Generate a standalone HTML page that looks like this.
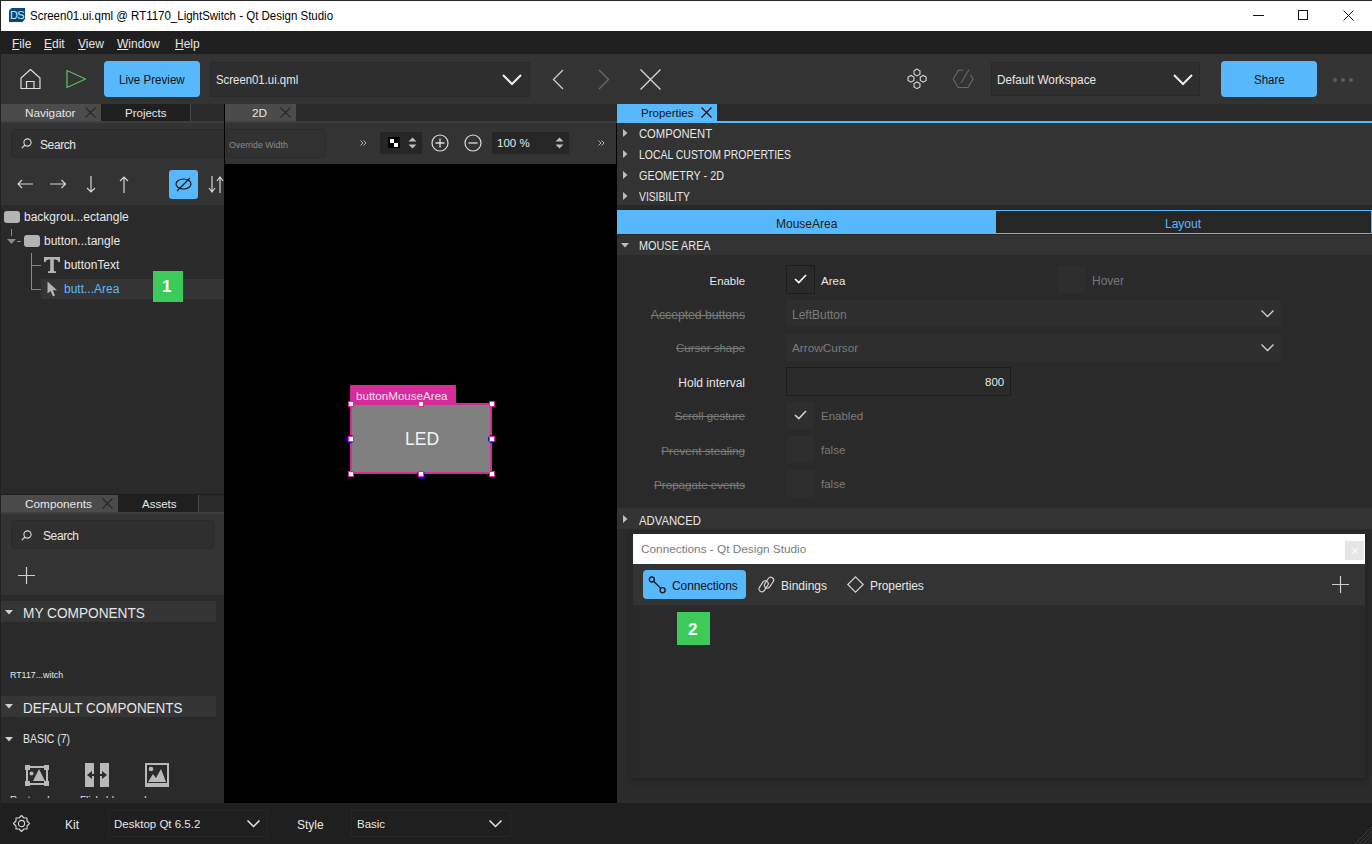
<!DOCTYPE html>
<html><head><meta charset="utf-8">
<style>
*{margin:0;padding:0;box-sizing:border-box}
html,body{width:1372px;height:844px;overflow:hidden;background:#333;font-family:"Liberation Sans",sans-serif}
.a{position:absolute}
.t{position:absolute;white-space:nowrap;line-height:1;font-size:12px;color:#e6e6e6}
svg{position:absolute;overflow:visible}
.lbl{position:absolute;white-space:nowrap;line-height:1;font-size:12px;text-align:right;width:140px;left:605px;color:#e6e6e6}
.dis{color:#7a7a7a;text-decoration:line-through}
</style></head><body>
<!-- ============ TITLE BAR ============ -->
<div class="a" style="left:0;top:0;width:1372px;height:31px;background:#fff;border-top:1px solid #3a3a3a;border-left:1px solid #3a3a3a"></div>
<div class="a" style="left:9px;top:8px;width:16px;height:14px;background:#034a7c;clip-path:polygon(16% 0,100% 0,100% 78%,84% 100%,0 100%,0 20%)"></div><div class="t" style="left:10px;top:10px;font-size:11px;color:#dce8ee;letter-spacing:-0.8px">DS</div>
<div class="t" style="left:30px;top:10px;font-size:12.5px;color:#000;transform:scaleX(0.919);transform-origin:0 0">Screen01.ui.qml @ RT1170_LightSwitch - Qt Design Studio</div>
<div class="a" style="left:1253px;top:15px;width:11px;height:1px;background:#111"></div>
<div class="a" style="left:1298px;top:10px;width:10px;height:10px;border:1px solid #111"></div>
<svg style="left:1343px;top:10px" width="11" height="11"><path d="M0.5 0.5L10.5 10.5M10.5 0.5L0.5 10.5" stroke="#111" stroke-width="1"/></svg>

<!-- ============ MENU BAR ============ -->
<div class="a" style="left:0;top:31px;width:1372px;height:23px;background:#1f1f1f;border-left:1px solid #3a3a3a"></div>
<div class="t" style="left:12px;top:38px"><u>F</u>ile</div>
<div class="t" style="left:44px;top:38px"><u>E</u>dit</div>
<div class="t" style="left:78px;top:38px"><u>V</u>iew</div>
<div class="t" style="left:117px;top:38px"><u>W</u>indow</div>
<div class="t" style="left:175px;top:38px"><u>H</u>elp</div>

<!-- ============ TOOLBAR ============ -->
<div class="a" style="left:0;top:54px;width:1372px;height:50px;background:#333;border-left:1px solid #262626"></div>
<svg style="left:20px;top:69px" width="21" height="20"><path d="M1 9 L10.5 0.5 L20 9 V19.5 H1 Z" fill="none" stroke="#dcdcdc" stroke-width="1.2" stroke-linejoin="round"/><path d="M6.5 19.5 V12.5 H14 V19.5" fill="none" stroke="#dcdcdc" stroke-width="1.2"/></svg>
<svg style="left:66px;top:69px" width="21" height="20"><path d="M1 1.5 L19.5 10 L1 18.5 Z" fill="none" stroke="#5cb85c" stroke-width="1.3" stroke-linejoin="round"/></svg>
<div class="a" style="left:104px;top:61px;width:96px;height:36px;background:#57b9fc;border-radius:4px"></div>
<div class="t" style="left:119px;top:74px;font-size:12.5px;color:#111;transform:scaleX(0.927);transform-origin:0 0">Live Preview</div>
<div class="a" style="left:210px;top:62px;width:320px;height:35px;background:#2e2e2e;border:1px solid #292929"></div>
<div class="t" style="left:216px;top:74px;font-size:12.5px;color:#e6e6e6;transform:scaleX(0.91);transform-origin:0 0">Screen01.ui.qml</div>
<svg style="left:502px;top:74px" width="20" height="11"><path d="M1 1 L10 10 L19 1" fill="none" stroke="#f0f0f0" stroke-width="2"/></svg>
<svg style="left:552px;top:69px" width="12" height="21"><path d="M11 1 L1.5 10.5 L11 20" fill="none" stroke="#cfcfcf" stroke-width="1.3"/></svg>
<svg style="left:598px;top:69px" width="12" height="21"><path d="M1 1 L10.5 10.5 L1 20" fill="none" stroke="#6a6a6a" stroke-width="1.3"/></svg>
<svg style="left:640px;top:69px" width="21" height="21"><path d="M0.5 0.5 L20.5 20.5 M20.5 0.5 L0.5 20.5" fill="none" stroke="#d8d8d8" stroke-width="1.3"/></svg>
<!-- right icons -->
<svg style="left:900px;top:62px" width="30" height="30"><path d="M17.00 7.10 L14.06 8.80 L14.06 12.20 L17.00 13.90 L19.94 12.20 L19.94 8.80 Z M11.00 13.40 L8.06 15.10 L8.06 18.50 L11.00 20.20 L13.94 18.50 L13.94 15.10 Z M23.20 13.40 L20.26 15.10 L20.26 18.50 L23.20 20.20 L26.14 18.50 L26.14 15.10 Z M17.00 19.90 L14.06 21.60 L14.06 25.00 L17.00 26.70 L19.94 25.00 L19.94 21.60 Z" fill="none" stroke="#d8d8d8" stroke-width="1.1"/></svg>
<svg style="left:950px;top:66px" width="26" height="26"><g fill="none" stroke="#6a6a6a" stroke-width="1.1"><path d="M13 4.3 H8.5 L3.2 13 L8.3 21.5 H18 L23 13 L20.5 8.7"/><path d="M11 17 L19 3.5"/></g></svg>
<div class="a" style="left:991px;top:62px;width:209px;height:34px;background:#2e2e2e;border:1px solid #292929"></div>
<div class="t" style="left:997px;top:74px;font-size:12.5px;color:#e6e6e6;transform:scaleX(0.94);transform-origin:0 0">Default Workspace</div>
<svg style="left:1173px;top:74px" width="20" height="11"><path d="M1 1 L10 10 L19 1" fill="none" stroke="#f0f0f0" stroke-width="2"/></svg>
<div class="a" style="left:1221px;top:61px;width:96px;height:36px;background:#57b9fc;border-radius:4px"></div>
<div class="t" style="left:1254px;top:74px;font-size:12.5px;color:#111;transform:scaleX(0.92);transform-origin:0 0">Share</div>
<div class="a" style="left:1333px;top:78px;width:4px;height:4px;border-radius:2px;background:#5a5a5a"></div>
<div class="a" style="left:1341px;top:78px;width:4px;height:4px;border-radius:2px;background:#5a5a5a"></div>
<div class="a" style="left:1349px;top:78px;width:4px;height:4px;border-radius:2px;background:#5a5a5a"></div>

<!-- LEFT PANEL -->
<div class="a" style="left:0;top:104px;width:224px;height:17px;background:#2a2a2a"></div>
<div class="a" style="left:1px;top:104px;width:100px;height:17px;background:#4b4b4b"></div>
<div class="t" style="left:25px;top:108px;font-size:11.8px">Navigator</div>
<svg style="left:85px;top:107px" width="11" height="11"><path d="M0.5 0.5L10.5 10.5M10.5 0.5L0.5 10.5" stroke="#262626" stroke-width="1.2"/></svg>
<div class="a" style="left:101px;top:104px;width:89px;height:17px;background:#1f1f1f"></div>
<div class="a" style="left:190px;top:104px;width:1px;height:17px;background:#4a4a4a"></div>
<div class="t" style="left:125px;top:108px;font-size:11.5px">Projects</div>
<div class="a" style="left:0;top:121px;width:224px;height:2px;background:#3d3d3d"></div>
<div class="a" style="left:0;top:123px;width:224px;height:82px;background:#333;border-left:1px solid #262626"></div>
<div class="a" style="left:11px;top:129px;width:230px;height:29px;background:#2f2f2f;border:1px solid #2a2a2a;border-radius:4px"></div>
<svg style="left:21px;top:138px" width="11" height="11"><circle cx="6.5" cy="4.5" r="3.6" fill="none" stroke="#d8d8d8" stroke-width="1.1"/><path d="M4 7 L0.8 10.2" stroke="#d8d8d8" stroke-width="1.2"/></svg>
<div class="t" style="left:40px;top:139px;font-size:12px;letter-spacing:-0.4px">Search</div>
<!-- arrows -->
<svg style="left:17px;top:179px" width="17" height="10"><path d="M1 5 H16 M5 1 L1 5 L5 9" fill="none" stroke="#d4d4d4" stroke-width="1.2"/></svg>
<svg style="left:50px;top:179px" width="17" height="10"><path d="M0 5 H15.5 M11.5 1 L15.5 5 L11.5 9" fill="none" stroke="#d4d4d4" stroke-width="1.2"/></svg>
<svg style="left:86px;top:176px" width="10" height="17"><path d="M5 0 V16 M1 12 L5 16 L9 12" fill="none" stroke="#d4d4d4" stroke-width="1.2"/></svg>
<svg style="left:119px;top:176px" width="10" height="17"><path d="M5 1 V17 M1 5 L5 1 L9 5" fill="none" stroke="#d4d4d4" stroke-width="1.2"/></svg>
<div class="a" style="left:169px;top:170px;width:29px;height:29px;background:#57b9fc;border-radius:3px"></div>
<svg style="left:175px;top:177px" width="17" height="15"><ellipse cx="8.5" cy="7" rx="7.5" ry="5" fill="none" stroke="#111" stroke-width="1.1"/><path d="M2 14 L15 1" stroke="#111" stroke-width="1.1"/></svg>
<svg style="left:208px;top:176px" width="16" height="17"><path d="M4 0 V16 M1 12 L4 16 L7 12 M12 17 V1 M9 5 L12 1 L15 5" fill="none" stroke="#d4d4d4" stroke-width="1.2"/></svg>
<!-- tree -->
<div class="a" style="left:0;top:205px;width:224px;height:289px;background:#2a2a2a;border-left:1px solid #262626"></div>
<div class="a" style="left:4px;top:211px;width:16px;height:12px;background:#b4b4b4;border-radius:3px"></div>
<div class="t" style="left:24px;top:211px;font-size:12px">backgrou...ectangle</div>
<div class="a" style="left:11px;top:229px;width:1px;height:7px;background:#8a8a8a"></div>
<svg style="left:7px;top:239px" width="10" height="6"><path d="M0 0 H9 L4.5 5 Z" fill="#8a8a8a"/></svg>
<div class="a" style="left:17px;top:241px;width:4px;height:1px;background:#8a8a8a"></div>
<div class="a" style="left:24px;top:235px;width:16px;height:12px;background:#b4b4b4;border-radius:3px"></div>
<div class="t" style="left:44px;top:235px;font-size:12px">button...tangle</div>
<div class="a" style="left:31px;top:253px;width:1px;height:37px;background:#8a8a8a"></div>
<div class="a" style="left:31px;top:265px;width:10px;height:1px;background:#8a8a8a"></div>
<div class="a" style="left:31px;top:289px;width:10px;height:1px;background:#8a8a8a"></div>
<svg style="left:44px;top:257px" width="16" height="16"><path d="M0 0 H16 V5 H14.5 Q14 2.5 11.5 2.5 H9.8 V13.2 Q9.8 14.2 11 14.2 H12 V16 H4 V14.2 H5 Q6.2 14.2 6.2 13.2 V2.5 H4.5 Q2 2.5 1.5 5 H0 Z" fill="#b4b4b4"/></svg>
<div class="t" style="left:64px;top:259px;font-size:12px">buttonText</div>
<div class="a" style="left:41px;top:279px;width:183px;height:20px;background:#353535"></div>
<svg style="left:47px;top:281px" width="11" height="16"><path d="M0.5 0.5 V12.5 L3.5 10 L6 15.5 L8 14.5 L5.8 9.2 L10 9.2 Z" fill="#b4b4b4"/></svg>
<div class="t" style="left:64px;top:283px;font-size:12px;color:#57b9fc">butt...Area</div>
<div class="a" style="left:153px;top:271px;width:30px;height:31px;background:#3ccb5a"></div>
<div class="t" style="left:162px;top:278px;font-size:17px;font-weight:bold;color:#fff">1</div>
<!-- components panel -->
<div class="a" style="left:0;top:494px;width:224px;height:1px;background:#1e1e1e"></div>
<div class="a" style="left:0;top:495px;width:224px;height:17px;background:#2a2a2a"></div>
<div class="a" style="left:1px;top:495px;width:117px;height:17px;background:#4b4b4b"></div>
<div class="t" style="left:25px;top:499px;font-size:11.8px">Components</div>
<svg style="left:102px;top:498px" width="11" height="11"><path d="M0.5 0.5L10.5 10.5M10.5 0.5L0.5 10.5" stroke="#262626" stroke-width="1.2"/></svg>
<div class="a" style="left:118px;top:495px;width:80px;height:17px;background:#1f1f1f"></div>
<div class="a" style="left:198px;top:495px;width:1px;height:17px;background:#4a4a4a"></div>
<div class="t" style="left:142px;top:499px;font-size:11.5px">Assets</div>
<div class="a" style="left:0;top:512px;width:224px;height:2px;background:#3d3d3d"></div>
<div class="a" style="left:0;top:514px;width:224px;height:81px;background:#333;border-left:1px solid #262626"></div>
<div class="a" style="left:11px;top:520px;width:203px;height:29px;background:#2f2f2f;border:1px solid #2a2a2a;border-radius:4px"></div>
<svg style="left:21px;top:530px" width="11" height="11"><circle cx="6.5" cy="4.5" r="3.6" fill="none" stroke="#d8d8d8" stroke-width="1.1"/><path d="M4 7 L0.8 10.2" stroke="#d8d8d8" stroke-width="1.2"/></svg>
<div class="t" style="left:43px;top:530px;font-size:12px;letter-spacing:-0.4px">Search</div>
<svg style="left:18px;top:567px" width="17" height="17"><path d="M8.5 0 V17 M0 8.5 H17" stroke="#cfcfcf" stroke-width="1.2"/></svg>
<div class="a" style="left:0;top:595px;width:224px;height:208px;background:#2a2a2a;border-left:1px solid #262626"></div>
<div class="a" style="left:1px;top:601px;width:215px;height:21px;background:#353535"></div>
<svg style="left:5px;top:610px" width="9" height="5"><path d="M0 0 H8 L4 4.5 Z" fill="#cfcfcf"/></svg>
<div class="t" style="left:23px;top:606px;font-size:14.5px;transform:scaleX(0.942);transform-origin:0 0">MY COMPONENTS</div>
<div class="t" style="left:10px;top:670px;font-size:9.5px;transform:scaleX(0.93);transform-origin:0 0">RT117...witch</div>
<div class="a" style="left:1px;top:696px;width:215px;height:21px;background:#353535"></div>
<svg style="left:5px;top:704px" width="9" height="5"><path d="M0 0 H8 L4 4.5 Z" fill="#cfcfcf"/></svg>
<div class="t" style="left:23px;top:701px;font-size:14.5px;transform:scaleX(0.928);transform-origin:0 0">DEFAULT COMPONENTS</div>
<svg style="left:5px;top:737px" width="9" height="5"><path d="M0 0 H8 L4 4.5 Z" fill="#cfcfcf"/></svg>
<div class="t" style="left:23px;top:733px;font-size:12px;transform:scaleX(0.87);transform-origin:0 0">BASIC (7)</div>
<!-- component icons -->
<svg style="left:25px;top:765px" width="24" height="21"><g fill="none" stroke="#b8b8b8" stroke-width="2"><rect x="2" y="2" width="20" height="17"/></g><g fill="#b8b8b8"><rect x="0" y="0" width="5" height="5"/><rect x="19" y="0" width="5" height="5"/><rect x="0" y="16" width="5" height="5"/><rect x="19" y="16" width="5" height="5"/><path d="M8 16 L14 4 L20 16 Z"/><circle cx="6.5" cy="8.5" r="2"/></g></svg>
<svg style="left:85px;top:763px" width="25" height="24"><g fill="#b8b8b8"><rect x="0" y="0" width="9" height="24"/><rect x="15" y="0" width="9" height="24"/></g><g fill="#2a2a2a"><path d="M2 12 L7 8 V16 Z"/><path d="M22 12 L17 8 V16 Z"/><rect x="6" y="11" width="3" height="2"/><rect x="15" y="11" width="3" height="2"/></g></svg>
<svg style="left:145px;top:763px" width="24" height="24"><g fill="none" stroke="#b8b8b8" stroke-width="2"><rect x="1" y="1" width="22" height="22"/></g><g fill="#b8b8b8"><rect x="1" y="20" width="22" height="3"/><path d="M3 19 L8 11 L11 15 L16 6 L21 19 Z"/><circle cx="6" cy="6" r="2.3"/></g></svg>
<div class="a" style="left:0;top:796px;width:224px;height:2px;overflow:hidden"><div class="t" style="left:10px;top:0px;font-size:10px">Rectangle</div><div class="t" style="left:80px;top:0px;font-size:10px">Flickable</div><div class="t" style="left:144px;top:0px;font-size:10px">Image</div></div>
<div class="a" style="left:224px;top:104px;width:1px;height:699px;background:#000"></div>
<!-- CENTER PANEL -->
<div class="a" style="left:225px;top:104px;width:392px;height:17px;background:#2a2a2a"></div>
<div class="a" style="left:225px;top:104px;width:71px;height:17px;background:#4b4b4b"></div>
<div class="t" style="left:252px;top:108px;font-size:11.8px">2D</div>
<svg style="left:280px;top:107px" width="11" height="11"><path d="M0.5 0.5L10.5 10.5M10.5 0.5L0.5 10.5" stroke="#262626" stroke-width="1.2"/></svg>
<div class="a" style="left:225px;top:121px;width:392px;height:2px;background:#3d3d3d"></div>
<div class="a" style="left:225px;top:123px;width:391px;height:41px;background:#333"></div>
<div class="a" style="left:226px;top:129px;width:100px;height:29px;border:1px solid #2b2b2b;border-radius:4px;background:#313131"></div>
<div class="t" style="left:229px;top:141px;font-size:9px;color:#8a8a8a;transform:scaleX(0.98);transform-origin:0 0">Override Width</div>
<svg style="left:360px;top:140px" width="7" height="6"><path d="M0.5 0.5 L3 3 L0.5 5.5 M3.5 0.5 L6 3 L3.5 5.5" fill="none" stroke="#bdbdbd" stroke-width="0.9"/></svg>
<div class="a" style="left:380px;top:132px;width:42px;height:22px;background:#262626"></div>
<div class="a" style="left:388px;top:137px;width:12px;height:11px;background:#000"></div>
<div class="a" style="left:390px;top:139px;width:4px;height:4px;background:#fff"></div>
<div class="a" style="left:394px;top:143px;width:4px;height:4px;background:#fff"></div>
<svg style="left:408px;top:137px" width="9" height="12"><path d="M0.5 4.5 L4.5 0.5 L8.5 4.5 Z M0.5 7.5 L4.5 11.5 L8.5 7.5 Z" fill="#bdbdbd"/></svg>
<svg style="left:431px;top:134px" width="18" height="18"><circle cx="9" cy="9" r="8" fill="none" stroke="#dcdcdc" stroke-width="1.2"/><path d="M9 4.5 V13.5 M4.5 9 H13.5" stroke="#dcdcdc" stroke-width="1.3"/></svg>
<svg style="left:464px;top:134px" width="18" height="18"><circle cx="9" cy="9" r="8" fill="none" stroke="#dcdcdc" stroke-width="1.2"/><path d="M4.5 9 H13.5" stroke="#dcdcdc" stroke-width="1.3"/></svg>
<div class="a" style="left:492px;top:132px;width:77px;height:22px;background:#262626"></div>
<div class="t" style="left:497px;top:138px;font-size:11.5px">100 %</div>
<svg style="left:555px;top:137px" width="9" height="12"><path d="M0.5 4.5 L4.5 0.5 L8.5 4.5 Z M0.5 7.5 L4.5 11.5 L8.5 7.5 Z" fill="#bdbdbd"/></svg>
<svg style="left:598px;top:140px" width="7" height="6"><path d="M0.5 0.5 L3 3 L0.5 5.5 M3.5 0.5 L6 3 L3.5 5.5" fill="none" stroke="#bdbdbd" stroke-width="0.9"/></svg>
<div class="a" style="left:225px;top:164px;width:392px;height:639px;background:#000"></div>
<div class="a" style="left:616px;top:123px;width:1px;height:41px;background:#000"></div>
<!-- canvas item -->
<div class="a" style="left:350px;top:385px;width:106px;height:20px;background:#d72b9c;border-radius:1px 1px 0 0"></div>
<div class="t" style="left:356px;top:390px;font-size:11.6px;color:#f0e0ea">buttonMouseArea</div>
<div class="a" style="left:350px;top:403px;width:142px;height:71px;background:#808080;border:2px solid #d72b9c"></div>
<div class="t" style="left:405px;top:431px;font-size:17.5px;color:#f4f4f4">LED</div>
<div class="a" style="left:346px;top:435px;width:8px;height:8px;border-radius:50%;background:#0808d8"></div>
<div class="a" style="left:488px;top:435px;width:8px;height:8px;border-radius:50%;background:#0808d8"></div>
<div class="a" style="left:417px;top:471px;width:8px;height:8px;border-radius:50%;background:#0808d8"></div>
<div class="a" style="left:348px;top:401px;width:6px;height:6px;background:#fff;border:1px solid #d72b9c"></div>
<div class="a" style="left:418px;top:401px;width:6px;height:6px;background:#fff;border:1px solid #d72b9c"></div>
<div class="a" style="left:489px;top:401px;width:6px;height:6px;background:#fff;border:1px solid #d72b9c"></div>
<div class="a" style="left:348px;top:436px;width:6px;height:6px;background:#fff;border:1px solid #d72b9c"></div>
<div class="a" style="left:489px;top:436px;width:6px;height:6px;background:#fff;border:1px solid #d72b9c"></div>
<div class="a" style="left:348px;top:471px;width:6px;height:6px;background:#fff;border:1px solid #d72b9c"></div>
<div class="a" style="left:418px;top:471px;width:6px;height:6px;background:#fff;border:1px solid #d72b9c"></div>
<div class="a" style="left:489px;top:471px;width:6px;height:6px;background:#fff;border:1px solid #d72b9c"></div>
<!-- RIGHT PANEL -->
<div class="a" style="left:617px;top:104px;width:755px;height:17px;background:#2a2a2a"></div>
<div class="a" style="left:617px;top:104px;width:100px;height:17px;background:#57b9fc"></div>
<div class="t" style="left:641px;top:108px;font-size:11.5px;color:#111">Properties</div>
<svg style="left:701px;top:107px" width="11" height="11"><path d="M0.5 0.5L10.5 10.5M10.5 0.5L0.5 10.5" stroke="#111" stroke-width="1.2"/></svg>
<div class="a" style="left:617px;top:121px;width:755px;height:2px;background:#57b9fc"></div>
<div class="a" style="left:617px;top:123px;width:755px;height:82px;background:#333"></div>
<svg style="left:623px;top:129px" width="5" height="9"><path d="M0 0 L4.5 4 L0 8 Z" fill="#bdbdbd"/></svg>
<div class="t" style="left:639px;top:128px;font-size:12px;transform:scaleX(0.936);transform-origin:0 0">COMPONENT</div>
<svg style="left:623px;top:150px" width="5" height="9"><path d="M0 0 L4.5 4 L0 8 Z" fill="#bdbdbd"/></svg>
<div class="t" style="left:639px;top:149px;font-size:12px;transform:scaleX(0.871);transform-origin:0 0">LOCAL CUSTOM PROPERTIES</div>
<svg style="left:623px;top:171px" width="5" height="9"><path d="M0 0 L4.5 4 L0 8 Z" fill="#bdbdbd"/></svg>
<div class="t" style="left:639px;top:170px;font-size:12px;transform:scaleX(0.902);transform-origin:0 0">GEOMETRY - 2D</div>
<svg style="left:623px;top:192px" width="5" height="9"><path d="M0 0 L4.5 4 L0 8 Z" fill="#bdbdbd"/></svg>
<div class="t" style="left:639px;top:191px;font-size:12px;transform:scaleX(0.859);transform-origin:0 0">VISIBILITY</div>
<div class="a" style="left:617px;top:205px;width:755px;height:5px;background:#272727"></div>
<div class="a" style="left:617px;top:210px;width:378px;height:24px;background:#57b9fc"></div>
<div class="t" style="left:776px;top:218px;font-size:12px;color:#1a1a1a">MouseArea</div>
<div class="a" style="left:995px;top:210px;width:377px;height:24px;background:#262626;border:1px solid #57b9fc"></div>
<div class="t" style="left:1165px;top:218px;font-size:12px;color:#57b9fc">Layout</div>
<div class="a" style="left:617px;top:234px;width:755px;height:1px;background:#262626"></div>
<div class="a" style="left:617px;top:235px;width:755px;height:20px;background:#333"></div>
<svg style="left:621px;top:243px" width="9" height="5"><path d="M0 0 H8 L4 4.5 Z" fill="#bdbdbd"/></svg>
<div class="t" style="left:639px;top:240px;font-size:12px;transform:scaleX(0.902);transform-origin:0 0">MOUSE AREA</div>
<div class="a" style="left:617px;top:255px;width:755px;height:253px;background:#2a2a2a"></div>
<!-- rows -->
<div class="lbl" style="top:276px;font-size:11.4px">Enable</div>
<div class="a" style="left:786px;top:265px;width:29px;height:29px;border:1px solid #1c1c1c"></div>
<svg style="left:794px;top:274px" width="13" height="10"><path d="M1 5 L4.8 8.6 L12 1" fill="none" stroke="#fff" stroke-width="1.7"/></svg>
<div class="t" style="left:821px;top:276px;font-size:11.5px">Area</div>
<div class="a" style="left:1058px;top:266px;width:27px;height:27px;background:#2e2e2e"></div>
<div class="t" style="left:1092px;top:275px;font-size:12px;color:#777">Hover</div>

<div class="lbl dis" style="top:309px;font-size:12.2px">Accepted buttons</div>
<div class="a" style="left:786px;top:300px;width:495px;height:27px;background:#2e2e2e"></div>
<div class="t" style="left:792px;top:309px;font-size:12px;color:#7a7a7a">LeftButton</div>
<svg style="left:1261px;top:310px" width="13" height="8"><path d="M0.5 0.5 L6.5 6.5 L12.5 0.5" fill="none" stroke="#cfcfcf" stroke-width="1.3"/></svg>

<div class="lbl dis" style="top:343px;font-size:11.5px">Cursor shape</div>
<div class="a" style="left:786px;top:334px;width:495px;height:27px;background:#2e2e2e"></div>
<div class="t" style="left:792px;top:343px;font-size:11.8px;color:#7a7a7a">ArrowCursor</div>
<svg style="left:1261px;top:344px" width="13" height="8"><path d="M0.5 0.5 L6.5 6.5 L12.5 0.5" fill="none" stroke="#cfcfcf" stroke-width="1.3"/></svg>

<div class="lbl" style="top:377px;font-size:12px">Hold interval</div>
<div class="a" style="left:786px;top:367px;width:225px;height:29px;border:1px solid #1c1c1c"></div>
<div class="t" style="left:985px;top:377px;font-size:11.5px">800</div>

<div class="lbl dis" style="top:411px;font-size:11.5px">Scroll gesture</div>
<div class="a" style="left:787px;top:402px;width:27px;height:27px;background:#2e2e2e"></div>
<svg style="left:794px;top:410px" width="13" height="10"><path d="M1 5 L4.8 8.6 L12 1" fill="none" stroke="#cfcfcf" stroke-width="1.6"/></svg>
<div class="t" style="left:821px;top:411px;font-size:11.5px;color:#7a7a7a">Enabled</div>

<div class="lbl dis" style="top:445px;font-size:11.7px">Prevent stealing</div>
<div class="a" style="left:787px;top:436px;width:27px;height:27px;background:#2e2e2e"></div>
<div class="t" style="left:821px;top:445px;font-size:11.5px;color:#7a7a7a">false</div>

<div class="lbl dis" style="top:479px;font-size:11.6px">Propagate events</div>
<div class="a" style="left:787px;top:470px;width:27px;height:27px;background:#2e2e2e"></div>
<div class="t" style="left:821px;top:479px;font-size:11.5px;color:#7a7a7a">false</div>

<div class="a" style="left:617px;top:508px;width:755px;height:21px;background:#333"></div>
<svg style="left:623px;top:515px" width="5" height="9"><path d="M0 0 L4.5 4 L0 8 Z" fill="#bdbdbd"/></svg>
<div class="t" style="left:639px;top:515px;font-size:12px;transform:scaleX(0.942);transform-origin:0 0">ADVANCED</div>
<div class="a" style="left:617px;top:529px;width:755px;height:274px;background:#2b2b2b"></div>
<!-- connections dialog -->
<div class="a" style="left:627px;top:530px;width:744px;height:255px;background:#282828;border-radius:6px"></div><div class="a" style="left:633px;top:778px;width:732px;height:3px;background:#232323"></div><div class="a" style="left:1365px;top:534px;width:3px;height:247px;background:#252525"></div>
<div class="a" style="left:633px;top:534px;width:732px;height:30px;background:#fff"></div>
<div class="t" style="left:641px;top:544px;font-size:11.8px;color:#7a7a7a">Connections - Qt Design Studio</div>
<div class="a" style="left:1345px;top:541px;width:19px;height:19px;background:#e6e6e6"></div>
<svg style="left:1352px;top:548px" width="6" height="6"><path d="M0.5 0.5L5.5 5.5M5.5 0.5L0.5 5.5" stroke="#fafafa" stroke-width="1.1"/></svg>
<div class="a" style="left:633px;top:564px;width:732px;height:41px;background:#333"></div>
<div class="a" style="left:643px;top:570px;width:103px;height:29px;background:#57b9fc;border-radius:4px"></div>
<svg style="left:648px;top:576px" width="18" height="18"><g fill="none" stroke="#111" stroke-width="1.3"><circle cx="3.8" cy="3.5" r="2.5"/><circle cx="14.6" cy="14.2" r="2.5"/><path d="M5.6 5.3 L12.8 12.4"/></g></svg>
<div class="t" style="left:672px;top:580px;font-size:12px;letter-spacing:-0.1px;color:#111">Connections</div>
<svg style="left:756px;top:575px" width="22" height="20"><g fill="none" stroke="#d0d0d0" stroke-width="1.2"><rect x="1.5" y="8.5" width="12" height="5.8" rx="2.9" transform="rotate(-56 7.5 11.3)"/><rect x="7" y="4.8" width="12" height="5.8" rx="2.9" transform="rotate(-56 13 7.7)"/></g></svg>
<div class="t" style="left:781px;top:580px;font-size:12px">Bindings</div>
<svg style="left:847px;top:576px" width="17" height="17"><path d="M8.5 0.8 L16.2 8.5 L8.5 16.2 L0.8 8.5 Z" fill="none" stroke="#d0d0d0" stroke-width="1.2"/></svg>
<div class="t" style="left:870px;top:580px;font-size:12px;letter-spacing:-0.1px">Properties</div>
<svg style="left:1332px;top:576px" width="17" height="17"><path d="M8.5 0 V17 M0 8.5 H17" stroke="#cfcfcf" stroke-width="1.2"/></svg>
<div class="a" style="left:633px;top:605px;width:732px;height:173px;background:#2a2a2a"></div>
<div class="a" style="left:677px;top:612px;width:33px;height:33px;background:#3ccb5a"></div>
<div class="t" style="left:688px;top:621px;font-size:17px;font-weight:bold;color:#fff">2</div>
<!-- BOTTOM BAR -->
<div class="a" style="left:0;top:803px;width:1372px;height:41px;background:#1f1f1f;border-left:1px solid #262626"></div>
<svg style="left:12px;top:814px" width="19" height="19"><g fill="none" stroke="#d8d8d8" stroke-width="1.1" stroke-linejoin="round"><path d="M9.5 1.5 L12.0 4.0 L15.0 4.0 L15.0 7.0 L17.5 9.5 L15.0 12.0 L15.0 15.0 L12.0 15.0 L9.5 17.5 L7.0 15.0 L4.0 15.0 L4.0 12.0 L1.5 9.5 L4.0 7.0 L4.0 4.0 L7.0 4.0 Z"/><circle cx="9.5" cy="9.5" r="3.1"/></g></svg>
<div class="t" style="left:65px;top:819px;font-size:12px">Kit</div>
<div class="a" style="left:108px;top:810px;width:160px;height:27px;background:#1f1f1f;border:1px solid #262626"></div>
<div class="t" style="left:114px;top:819px;font-size:11.5px">Desktop Qt 6.5.2</div>
<svg style="left:247px;top:820px" width="13" height="8"><path d="M0.5 0.5 L6.5 6.5 L12.5 0.5" fill="none" stroke="#e6e6e6" stroke-width="1.5"/></svg>
<div class="t" style="left:297px;top:819px;font-size:12px">Style</div>
<div class="a" style="left:351px;top:810px;width:160px;height:27px;background:#1f1f1f;border:1px solid #262626"></div>
<div class="t" style="left:357px;top:819px;font-size:11.5px">Basic</div>
<svg style="left:489px;top:820px" width="13" height="8"><path d="M0.5 0.5 L6.5 6.5 L12.5 0.5" fill="none" stroke="#e6e6e6" stroke-width="1.5"/></svg>
<svg style="left:1355px;top:827px" width="17" height="17"><path d="M17 0 L0 17 M17 4 L4 17 M17 8 L8 17 M17 12 L12 17" stroke="#3a3a3a" stroke-width="1"/></svg>
<div class="a" style="left:0;top:0;width:1px;height:844px;background:#212121"></div>
<div class="a" style="left:0;top:0;width:1372px;height:1px;background:#2a2a2a"></div>
</body></html>
